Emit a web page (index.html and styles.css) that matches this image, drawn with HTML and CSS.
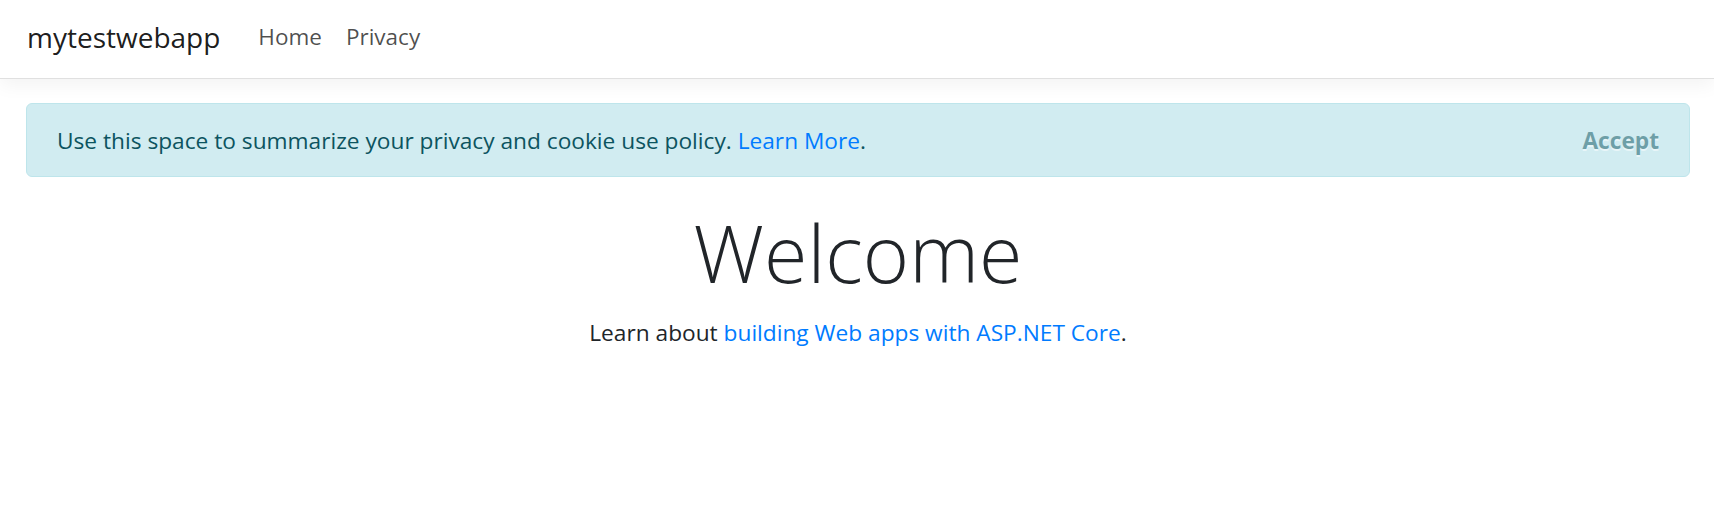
FILE: index.html
```html
<!DOCTYPE html>
<html lang="en">
<head>
<meta charset="utf-8">
<title>mytestwebapp</title>
<link rel="stylesheet" href="styles.css">
</head>
<body>
<header class="navbar">
  <div class="nav-inner">
    <a class="brand" href="#">mytestwebapp</a>
    <ul class="nav-links">
      <li><a class="nav-link" href="#">Home</a></li>
      <li><a class="nav-link" href="#">Privacy</a></li>
    </ul>
  </div>
</header>
<main class="container">
  <div class="alert">
    <span class="alert-text">Use this space to summarize your privacy and cookie use policy. <a href="#" class="link">Learn More</a>.</span>
    <button type="button" class="accept"><span>Accept</span></button>
  </div>
  <div class="hero">
    <h1 class="display">Welcome</h1>
    <p class="lead-text">Learn about <a href="#" class="link">building Web apps with ASP.NET Core</a>.</p>
  </div>
</main>
</body>
</html>
```
FILE: styles.css
```css
html, body {
  margin: 0;
  padding: 0;
  background: #fff;
}
body {
  font-family: "Open Sans", "Noto Sans", sans-serif;
  color: #212529;
  font-size: 22.7px;
}
a { text-decoration: none; }
.navbar {
  height: 79px;
  border-bottom: 1.5px solid #e0e0e0;
  box-shadow: 0 6px 18px rgba(0, 0, 0, 0.05);
  background: #fff;
  box-sizing: border-box;
}
.nav-inner {
  height: 100%;
  box-sizing: border-box;
  display: flex;
  align-items: center;
  padding-left: 27px;
  padding-bottom: 4px;
}
.brand {
  font-size: 28px;
  color: rgba(0, 0, 0, 0.9);
  margin-right: 26px;
  line-height: 1.5;
}
.nav-links {
  list-style: none;
  margin: 0;
  padding: 0;
  display: flex;
}
.nav-link {
  display: block;
  padding: 0 12px;
  color: rgba(0, 0, 0, 0.7);
  font-size: 22.5px;
  line-height: 1.5;
}
.container {
  padding: 0 24px 0 26px;
}
.alert {
  margin-top: 24px;
  height: 74px;
  box-sizing: border-box;
  background: #d1ecf1;
  border: 1.5px solid #bee5eb;
  border-radius: 6px;
  color: #0c5460;
  display: flex;
  align-items: center;
  justify-content: space-between;
  padding: 1px 30px 0 30px;
}
.alert-text {
  font-size: 22.7px;
}
.link { color: #007bff; }
.accept {
  background: transparent;
  border: 0;
  padding: 0;
  font-family: inherit;
  font-size: 22.7px;
  font-weight: 700;
  color: #0c5460;
  opacity: 0.5;
  text-shadow: 0 1.5px 0 #fff;
  cursor: pointer;
}
.hero {
  text-align: center;
  margin-top: 29px;
}
.display {
  font-size: 79px;
  font-weight: 300;
  line-height: 1.2;
  margin: 0 0 15px;
}
.lead-text {
  margin: 0;
  line-height: 1.5;
}
```
